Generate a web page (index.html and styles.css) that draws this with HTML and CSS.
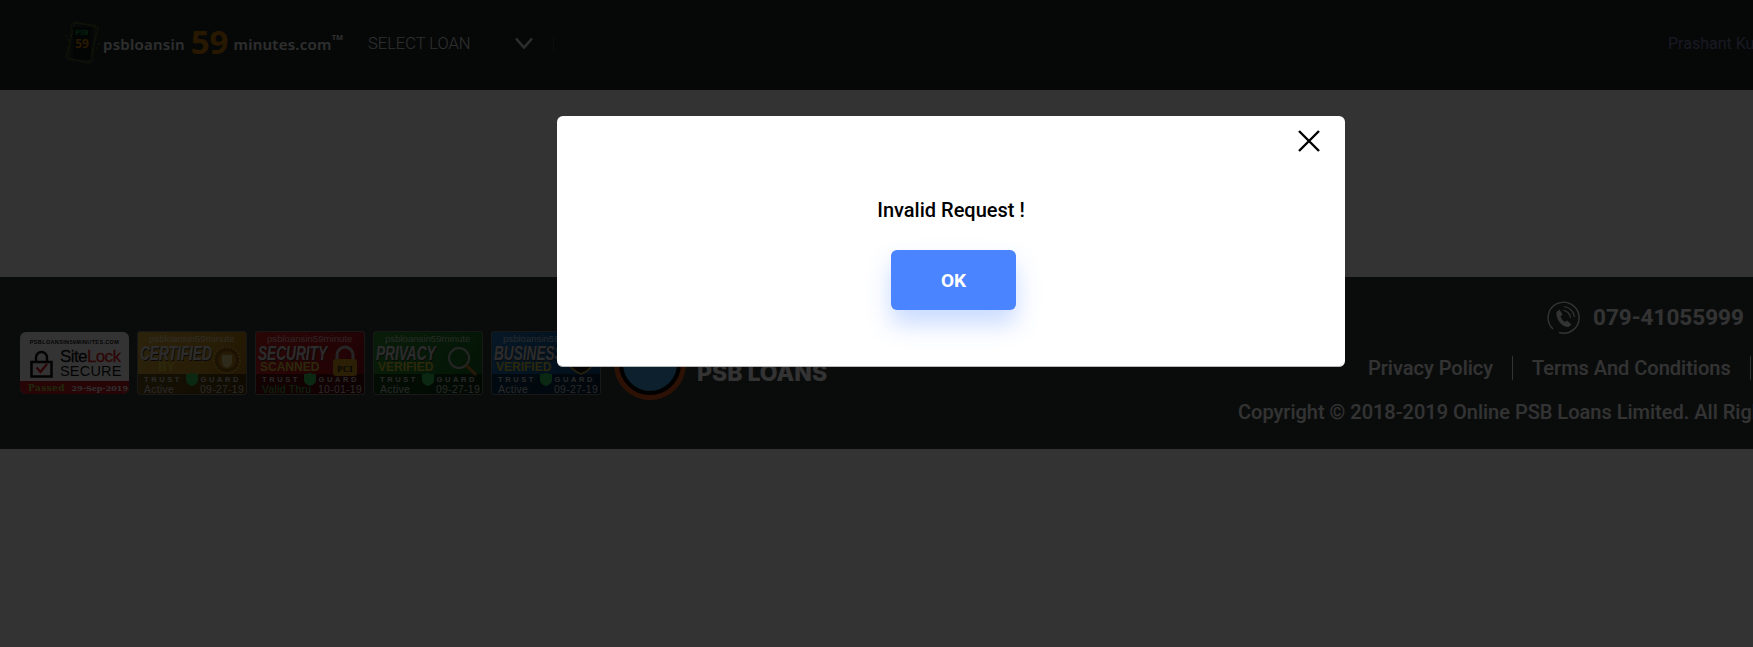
FILE: index.html
```html
<!DOCTYPE html>
<html lang="en">
<head>
  <meta charset="UTF-8" />
  <title>PSB Loans in 59 Minutes</title>
  <link rel="stylesheet" href="styles.css">
</head>
<body>
  <div class="page">
    <header class="topbar">
      <a class="logo">
        <svg class="logo-icon" width="36" height="44" viewBox="0 0 36 44">
          <rect x="6" y="3" width="24" height="37" fill="none" stroke="#6f8a24" stroke-width="0.6" transform="rotate(14 18 22)"/>
          <rect x="6" y="3" width="24" height="37" fill="none" stroke="#4e6c1c" stroke-width="0.6" transform="rotate(5 18 22)"/>
          <rect x="9" y="6" width="18" height="32" fill="#111818"/>
          <text x="18" y="14" class="logo-icon-psb">PSB</text>
          <text x="18" y="27" class="logo-icon-num">59</text>
          <circle cx="2" cy="15" r="0.8" fill="#6f8a24"/>
          <circle cx="4" cy="19" r="0.8" fill="#6f8a24"/>
          <circle cx="33" cy="27" r="0.8" fill="#6f8a24"/>
          <circle cx="35" cy="23" r="0.8" fill="#6f8a24"/>
        </svg>
        <span class="logo-word">psbloansin</span>
        <span class="logo-num">59</span>
        <span class="logo-word">minutes.com</span>
        <sup class="logo-tm">TM</sup>
      </a>
      <div class="select-loan">
        <span>SELECT LOAN</span>
        <svg width="18" height="13" viewBox="0 0 18 13"><path d="M1 1.5 L9 10.5 L17 1.5" fill="none" stroke="#ddd" stroke-width="2.6"/></svg>
      </div>
      <i class="nav-sep"></i>
      <div class="user-name">Prashant Kumar</div>
    </header>

    <main class="content"></main>

    <footer class="footer">
      <div class="foot-left">
        <div class="sitelock">
          <div class="sitelock-url">PSBLOANSIN59MINUTES.COM</div>
          <div class="sitelock-main">
            <svg width="23" height="28" viewBox="0 0 23 28">
              <path d="M6 12 V7.5 a5.5 5.5 0 0 1 11 0 V12" fill="none" stroke="#111" stroke-width="2.4"/>
              <rect x="1.5" y="12" width="20" height="14.5" fill="none" stroke="#111" stroke-width="2.6"/>
              <path d="M6.5 17.5 L10.5 22 L17 14" fill="none" stroke="#e01b24" stroke-width="2.4"/>
            </svg>
            <div class="sitelock-name">
              <div class="sitelock-brand">Site<b>Lock</b></div>
              <div class="sitelock-secure">SECURE</div>
            </div>
          </div>
          <div class="sitelock-foot"><span class="sitelock-passed">Passed</span><span>29-Sep-2019</span></div>
        </div>

        <div class="seal seal-gold">
          <div class="seal-site">psbloansin59minute</div>
          <div class="seal-title"><span>CERTIFIED</span></div>
          <div class="seal-sub seal-sub-by">BY</div>
          <svg class="seal-emblem" width="30" height="30" viewBox="0 0 30 30">
            <circle cx="15" cy="15" r="13" fill="#8f6212" stroke="#d8aa3a" stroke-width="2" stroke-dasharray="2 1.5"/>
            <circle cx="15" cy="15" r="9" fill="#b8861f"/>
            <path d="M10 10 H20 V16 Q20 21 15 23 Q10 21 10 16 Z" fill="#e8d48a"/>
          </svg>
          <div class="seal-strip">
            <div class="seal-trust"><span>TRUST</span><span>GUARD</span></div>
            <div class="seal-date"><span>Active</span><span>09-27-19</span></div>
          </div>
          <svg class="seal-shield" width="12" height="14" viewBox="0 0 12 14"><path d="M0 2 Q6 2 6 0 Q6 2 12 2 V8 Q12 12 6 14 Q0 12 0 8 Z" fill="#35c659"/></svg>
        </div>

        <div class="seal seal-red">
          <div class="seal-site">psbloansin59minute</div>
          <div class="seal-title"><span>SECURITY</span></div>
          <div class="seal-sub">SCANNED</div>
          <svg class="seal-emblem" width="30" height="32" viewBox="0 0 30 32">
            <path d="M7 15 V10 a8 8 0 0 1 16 0 V15" fill="none" stroke="#bbb" stroke-width="3"/>
            <rect x="3" y="14" width="24" height="17" rx="3" fill="#d89a1c"/>
            <text x="15" y="27" class="seal-pci">PCI</text>
          </svg>
          <div class="seal-strip">
            <div class="seal-trust"><span>TRUST</span><span>GUARD</span></div>
            <div class="seal-date"><span class="seal-valid">Valid Thru</span><span>10-01-19</span></div>
          </div>
          <svg class="seal-shield" width="12" height="14" viewBox="0 0 12 14"><path d="M0 2 Q6 2 6 0 Q6 2 12 2 V8 Q12 12 6 14 Q0 12 0 8 Z" fill="#35c659"/></svg>
        </div>

        <div class="seal seal-green">
          <div class="seal-site">psbloansin59minute</div>
          <div class="seal-title"><span>PRIVACY</span></div>
          <div class="seal-sub">VERIFIED</div>
          <svg class="seal-emblem" width="32" height="32" viewBox="0 0 32 32">
            <circle cx="13" cy="13" r="10" fill="none" stroke="#bbb" stroke-width="2"/>
            <path d="M20 20 L30 30" stroke="#c87a28" stroke-width="3"/>
          </svg>
          <div class="seal-strip">
            <div class="seal-trust"><span>TRUST</span><span>GUARD</span></div>
            <div class="seal-date"><span>Active</span><span>09-27-19</span></div>
          </div>
          <svg class="seal-shield" width="12" height="14" viewBox="0 0 12 14"><path d="M0 2 Q6 2 6 0 Q6 2 12 2 V8 Q12 12 6 14 Q0 12 0 8 Z" fill="#35c659"/></svg>
        </div>

        <div class="seal seal-blue">
          <div class="seal-site">psbloansin59minute</div>
          <div class="seal-title"><span>BUSINESS</span></div>
          <div class="seal-sub">VERIFIED</div>
          <svg class="seal-emblem" width="30" height="30" viewBox="0 0 30 30">
            <path d="M3 6 H27 V16 Q27 24 15 29 Q3 24 3 16 Z" fill="#111" stroke="#d8aa3a" stroke-width="1.5"/>
          </svg>
          <div class="seal-strip">
            <div class="seal-trust"><span>TRUST</span><span>GUARD</span></div>
            <div class="seal-date"><span>Active</span><span>09-27-19</span></div>
          </div>
          <svg class="seal-shield" width="12" height="14" viewBox="0 0 12 14"><path d="M0 2 Q6 2 6 0 Q6 2 12 2 V8 Q12 12 6 14 Q0 12 0 8 Z" fill="#35c659"/></svg>
        </div>

        <div class="psb-brand">
          <svg width="72" height="72" viewBox="0 0 72 72">
            <circle cx="36" cy="36" r="33.5" fill="#000" stroke="#e2561a" stroke-width="5"/>
            <circle cx="36" cy="36" r="27" fill="#3f9fe0"/>
          </svg>
          <div class="psb-name">ONLINE<br>PSB LOANS</div>
        </div>
      </div>

      <div class="foot-right">
        <div class="foot-phone">
          <svg width="33" height="33" viewBox="0 0 33 33">
            <path d="M6 28 A15.5 15.5 0 1 1 12 31.5" fill="none" stroke="#fff" stroke-width="1.4"/>
            <path d="M9.5 11 L12.5 8.5 L15.5 13.5 L13.5 15.5 Q14.5 19 18 21 L20 19.5 L24.5 23.5 L21.5 26 Q16 26 12.5 21 Q9 16.5 9.5 11 Z" fill="#fff"/>
            <path d="M16.5 9.5 A8 8 0 0 1 23.5 17 M17 5.5 A12 12 0 0 1 27.5 16" fill="none" stroke="#fff" stroke-width="1.2"/>
          </svg>
          <span>079-41055999</span>
        </div>
        <div class="foot-links">
          <a>Privacy Policy</a>
          <a>Terms And Conditions</a>
          <a>Disclaimer</a>
        </div>
        <div class="foot-copy">Copyright © 2018-2019 Online PSB Loans Limited. All Rights Reserved.</div>
      </div>
    </footer>
  </div>

  <div class="overlay">
    <div class="modal">
      <svg class="modal-close" width="22" height="22" viewBox="0 0 22 22"><path d="M1 1 L21 21 M21 1 L1 21" fill="none" stroke="#000" stroke-width="2.4"/></svg>
      <p class="modal-text">Invalid Request !</p>
      <button class="modal-btn">OK</button>
    </div>
  </div>
</body>
</html>
```

FILE: styles.css
```css
* {
  box-sizing: border-box;
  margin: 0;
  padding: 0;
}

html, body {
  height: 100%;
  overflow: hidden;
}

body {
  font-family: Roboto, sans-serif;
  background: #fff;
}

.page {
  width: 1902px;
}

/* header */
.topbar {
  height: 90px;
  padding: 0 0 4px 65px;
  background: #1f2a2a;
  display: flex;
  align-items: center;
  color: #fff;
}

.logo {
  display: flex;
  align-items: center;
  width: 302px;
  font-family: "Noto Sans", sans-serif;
  color: #e6e6e6;
}

.logo-icon {
  margin: 0 3px 0 -1px;
  flex-shrink: 0;
}

.logo-icon-psb {
  font: 700 7px "Noto Sans", sans-serif;
  fill: #17a04a;
  text-anchor: middle;
}

.logo-icon-num {
  font: 700 12px "Noto Sans", sans-serif;
  fill: #c87800;
  text-anchor: middle;
}

.logo-word {
  font-size: 15px;
  font-weight: 600;
  letter-spacing: 0.25px;
  padding-top: 1px;
}

.logo-num {
  font-size: 33px;
  font-weight: 700;
  color: #c87800;
  margin: -3px 5px 0 6px;
  line-height: 1;
}

.logo-tm {
  font-size: 7.5px;
  font-weight: 700;
  margin-bottom: 12px;
}

.select-loan {
  width: 185px;
  margin-left: 1px;
  display: flex;
  align-items: center;
  justify-content: space-between;
  padding-right: 20px;
  font-size: 16.5px;
  font-weight: 300;
  color: #e6e6e6;
}

.nav-sep {
  width: 1px;
  height: 16px;
  background: #3a4444;
}

.user-name {
  margin-left: 1114px;
  font-size: 16px;
  color: #7a7ca8;
  white-space: nowrap;
}

.content {
  height: 187px;
  background: #fff;
}

/* footer */
.footer {
  height: 172px;
  background: #323c3c;
  display: flex;
  align-items: flex-start;
  color: #fff;
}

.foot-left {
  width: 1238px;
  flex-shrink: 0;
  padding: 54px 0 0 20px;
  display: flex;
  align-items: flex-start;
  gap: 8px;
}

.sitelock {
  width: 109px;
  height: 62px;
  margin-top: 1px;
  border-radius: 6px;
  overflow: hidden;
  background: #fff;
  color: #111;
  display: flex;
  flex-direction: column;
  font-family: "Liberation Sans", sans-serif;
}

.sitelock-url {
  font-size: 5.5px;
  font-weight: 700;
  text-align: center;
  padding-top: 7px;
  letter-spacing: 0.35px;
  line-height: 7px;
}

.sitelock-main {
  flex: 1;
  display: flex;
  align-items: center;
  padding: 0 4px 0 10px;
  gap: 7px;
}

.sitelock-brand {
  font-size: 17px;
  line-height: 15px;
  letter-spacing: -0.6px;
  font-weight: 500;
  -webkit-text-stroke: 0.3px currentColor;
}

.sitelock-brand b {
  font-weight: 400;
  color: #e01b24;
}

.sitelock-secure {
  font-size: 14.5px;
  line-height: 14px;
  letter-spacing: 0.2px;
}

.sitelock-foot {
  height: 13px;
  background: #c3141c;
  color: #eee;
  display: flex;
  justify-content: space-between;
  align-items: center;
  padding: 0 1px 0 8px;
  font: 700 8px "DejaVu Serif", serif;
}

.sitelock-passed {
  font-size: 9px;
  color: #a6c840;
  letter-spacing: 0.4px;
}

.seal {
  position: relative;
  width: 110px;
  height: 64px;
  border: 1px solid #777;
  border-radius: 3px;
  overflow: hidden;
  font-family: "Liberation Sans", sans-serif;
  color: #fff;
  display: flex;
  flex-direction: column;
}

.seal-gold { background: linear-gradient(120deg, #d8ac40, #c48e1c 60%, #9a6c10); }
.seal-red { background: linear-gradient(120deg, #d02020, #b0101a 70%, #7c0a10); }
.seal-green { background: linear-gradient(120deg, #2f8f30, #1a7424 70%, #125a1c); }
.seal-blue { background: linear-gradient(120deg, #2274bc, #0e548f 70%, #0a4074); }

.seal-site {
  font-size: 9.6px;
  line-height: 12px;
  padding-left: 11px;
  white-space: nowrap;
  color: rgba(255, 255, 255, 0.7);
  margin-top: 1px;
}

.seal-title {
  font-size: 21px;
  font-weight: 700;
  font-style: italic;
  line-height: 16px;
  height: 16px;
  padding-left: 2px;
  white-space: nowrap;
}

.seal-title span {
  display: inline-block;
  transform: scaleX(0.65);
  transform-origin: left center;
  color: #dcdcdc;
  text-shadow: 1px 1px 0 #333;
}

.seal-sub {
  font-size: 12px;
  font-weight: 700;
  line-height: 13px;
  padding-left: 4px;
  color: #d8c83a;
}

.seal-sub-by {
  padding-left: 20px;
}

.seal-emblem {
  position: absolute;
  top: 13px;
  right: 4px;
}

.seal-strip {
  margin-top: auto;
  height: 22px;
  padding: 1px 2px 0 6px;
  background: rgba(0, 0, 0, 0.5);
}

.seal-trust {
  display: flex;
  justify-content: space-between;
  padding-right: 3px;
  font-size: 7.5px;
  font-weight: 700;
  line-height: 9px;
  letter-spacing: 2.6px;
  color: #ccc;
}

.seal-date {
  display: flex;
  justify-content: space-between;
  font-size: 10.4px;
  line-height: 11px;
  letter-spacing: 0.3px;
  color: #ccc;
}

.seal-valid {
  color: #35c659;
}

.seal-shield {
  position: absolute;
  left: 48px;
  top: 40px;
}

.seal-pci {
  font: 700 9px "Liberation Serif", serif;
  fill: #222;
  text-anchor: middle;
}

.psb-brand {
  display: flex;
  align-items: flex-start;
  gap: 11px;
  margin: -3px 0 0 5px;
}

.psb-name {
  margin-top: 11px;
  font: 800 23px/23px Inter, sans-serif;
  white-space: nowrap;
}

.foot-right {
  padding-top: 23px;
  white-space: nowrap;
}

.foot-phone {
  height: 34px;
  padding-left: 309px;
  display: flex;
  align-items: center;
  gap: 13px;
  font-size: 22.5px;
  font-weight: 700;
}

.foot-links {
  display: flex;
  margin-top: 22px;
  padding-left: 130px;
  font-size: 20px;
  font-weight: 500;
  line-height: 24px;
}

.foot-links a {
  padding-right: 19px;
  margin-right: 19px;
  border-right: 1px solid #fff;
}

.foot-copy {
  margin-top: 20px;
  font-size: 20px;
  font-weight: 500;
  line-height: 24px;
}

/* dialog */
.overlay {
  position: fixed;
  top: 0;
  left: 0;
  width: 1902px;
  height: 100%;
  background: rgba(0, 0, 0, 0.8);
  display: flex;
  justify-content: center;
  align-items: flex-start;
}

.modal {
  position: relative;
  width: 788px;
  height: 251px;
  margin-top: 116px;
  padding-top: 82px;
  background: #fff;
  border-radius: 6px;
  border-bottom: 1px solid #bbb;
  text-align: center;
}

.modal-close {
  position: absolute;
  top: 14px;
  right: 25px;
}

.modal-text {
  font-size: 20px;
  font-weight: 500;
  line-height: 24px;
  color: #000;
}

.modal-btn {
  display: block;
  width: 125px;
  height: 60px;
  margin: 28px auto 0;
  position: relative;
  left: 2.5px;
  border: none;
  border-radius: 6px;
  background: #4a84ff;
  color: #fff;
  font-family: Roboto, sans-serif;
  font-size: 19px;
  font-weight: 700;
  box-shadow: 0 14px 24px rgba(74, 132, 255, 0.3);
}
```
